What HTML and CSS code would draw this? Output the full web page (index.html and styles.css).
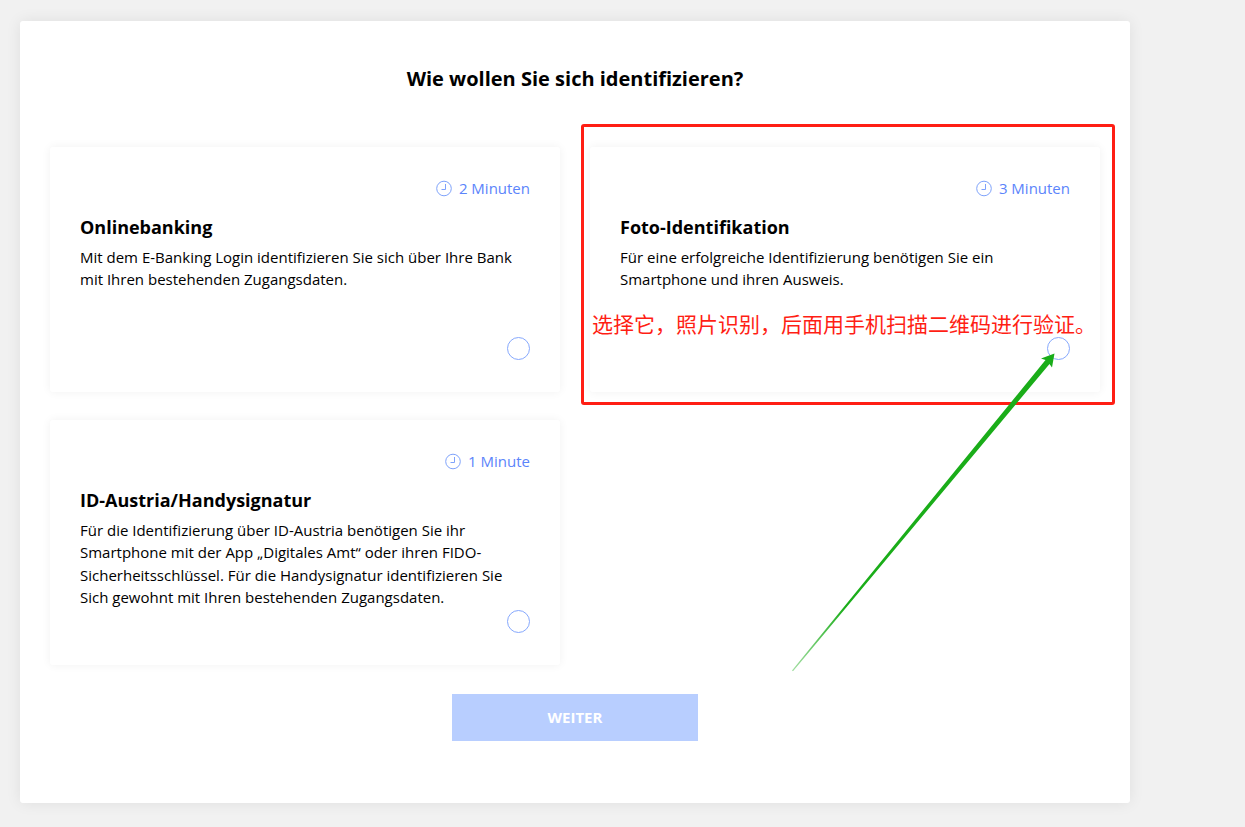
FILE: index.html
```html
<!DOCTYPE html>
<html lang="de">
<head>
<meta charset="utf-8">
<meta name="viewport" content="width=device-width, initial-scale=1">
<title>Identifizierung</title>
<link rel="stylesheet" href="styles.css">
</head>
<body>
<main class="panel">
  <form class="form">
    <h1 class="title">Wie wollen Sie sich identifizieren?</h1>
    <div class="options">
      <label class="card" for="opt-bank">
        <span class="time">
          <svg class="clock" viewBox="0 0 16 16" aria-hidden="true"><circle cx="8" cy="8.5" r="7.3"/><path d="M9.500 4V9.500H5.500"/></svg>
          2 Minuten
        </span>
        <span class="name">Onlinebanking</span>
        <span class="desc">Mit dem E-Banking Login identifizieren Sie sich über Ihre Bank mit Ihren bestehenden Zugangsdaten.</span>
        <input class="radio" type="radio" name="method" id="opt-bank">
      </label>
      <div class="marked">
        <label class="card" for="opt-foto">
          <span class="time">
            <svg class="clock" viewBox="0 0 16 16" aria-hidden="true"><circle cx="8" cy="8.5" r="7.3"/><path d="M9.500 4V9.500H5.500"/></svg>
            3 Minuten
          </span>
          <span class="name">Foto-Identifikation</span>
          <span class="desc">Für eine erfolgreiche Identifizierung benötigen Sie ein Smartphone und ihren Ausweis.</span>
          <input class="radio" type="radio" name="method" id="opt-foto">
        </label>
        <div class="frame"></div>
        <p class="note" lang="zh">选择它，照片识别，后面用手机扫描二维码进行验证。</p>
        <svg class="arrow" viewBox="0 0 270 324" aria-hidden="true">
          <defs>
            <linearGradient id="fade" gradientUnits="userSpaceOnUse" x1="2" y1="321" x2="56" y2="257">
              <stop offset="0" stop-color="#1aad19" stop-opacity="0.4"/>
              <stop offset="1" stop-color="#1aad19"/>
            </linearGradient>
          </defs>
          <path fill="url(#fade)" d="M2 320.500 L255.500 10 L251 8.500 L264.500 3.500 L262 17.500 L259.500 14 L3 321.200 Z"/>
        </svg>
      </div>
      <label class="card" for="opt-id">
        <span class="time">
          <svg class="clock" viewBox="0 0 16 16" aria-hidden="true"><circle cx="8" cy="8.5" r="7.3"/><path d="M9.500 4V9.500H5.500"/></svg>
          1 Minute
        </span>
        <span class="name">ID-Austria/Handysignatur</span>
        <span class="desc">Für die Identifizierung über ID-Austria benötigen Sie ihr Smartphone mit der App „Digitales Amt“ oder ihren FIDO-Sicherheitsschlüssel. Für die Handysignatur identifizieren Sie Sich gewohnt mit Ihren bestehenden Zugangsdaten.</span>
        <input class="radio" type="radio" name="method" id="opt-id">
      </label>
    </div>
    <button class="submit" type="submit">WEITER</button>
  </form>
</main>
</body>
</html>
```

FILE: styles.css
```css
* {
  box-sizing: border-box;
}

body {
  margin: 0;
  padding: 21px 20px 24px;
  background: #f1f1f1;
  color: #000;
  font-family: "Open Sans", "Noto Sans CJK SC", sans-serif;
  font-size: 15px;
  line-height: 1.5;
}

.panel {
  max-width: 1110px;
  padding: 43px 30px 62px;
  background: #fff;
  border-radius: 3px;
  box-shadow: 0 0 15px rgba(0, 0, 0, 0.08);
}

.form {
  display: flex;
  flex-direction: column;
}

.title {
  margin: 0 0 53px;
  font-size: 20px;
  font-weight: 700;
  text-align: center;
}

.options {
  display: grid;
  grid-template-columns: repeat(2, minmax(0, 1fr));
  gap: 28px 30px;
}

.card {
  display: flex;
  flex-direction: column;
  min-height: 245px;
  padding: 30px 30px 32px;
  background: #fff;
  border-radius: 3px;
  box-shadow: 0 0 10px rgba(0, 0, 0, 0.06);
  cursor: pointer;
}

.time {
  display: flex;
  align-items: center;
  justify-content: flex-end;
  gap: 7px;
  margin-bottom: 14px;
  color: #5b84fb;
}

.clock {
  width: 16px;
  height: 16px;
  overflow: visible;
  fill: none;
  stroke: #7ea2fb;
}

.name {
  margin-bottom: 5px;
  font-size: 18px;
  font-weight: 700;
}

.desc {
  max-width: 435px;
}

.radio {
  appearance: none;
  flex: none;
  align-self: flex-end;
  width: 23px;
  height: 23px;
  margin: auto 0 0;
  border: 1px solid #86a8fd;
  border-radius: 50%;
  background: transparent;
}

.radio:checked {
  background: #86a8fd;
}

.submit {
  align-self: center;
  width: 246px;
  height: 47px;
  margin-top: 29px;
  border: 0;
  background: #b8ceff;
  color: #fff;
  font: inherit;
  font-weight: 700;
}

.marked {
  position: relative;
}

.frame {
  position: absolute;
  inset: -23px -15px -13px -9px;
  border: 3px solid #ff1e14;
  border-radius: 3px;
  pointer-events: none;
}

.note {
  position: absolute;
  top: 161px;
  left: 2px;
  margin: 0;
  color: #ff1e14;
  font-family: "Noto Sans CJK SC", sans-serif;
  font-size: 21px;
  white-space: nowrap;
  pointer-events: none;
}

.arrow {
  position: absolute;
  top: 203px;
  right: 40px;
  width: 270px;
  height: 324px;
  pointer-events: none;
}
```
